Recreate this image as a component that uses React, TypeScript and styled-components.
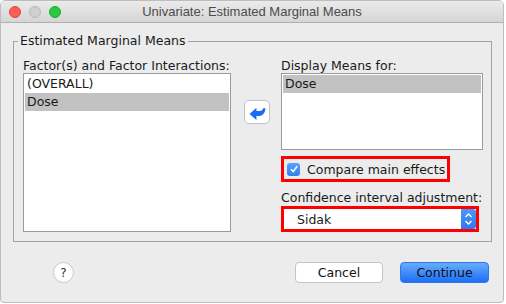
import React from "react";
import styled, { createGlobalStyle } from "styled-components";

const Global = createGlobalStyle`
  html, body { margin: 0; padding: 0; background: #ffffff; }
  body { font-family: "DejaVu Sans", "Liberation Sans", sans-serif; font-size: 12.5px; color: #1a1a1a; }
`;

const Window = styled.div`
  width: 504px;
  height: 303px;
  box-sizing: border-box;
  border: 1px solid #bdbdbd;
  border-radius: 5px 5px 4px 4px;
  background: #ececec;
  display: flex;
  flex-direction: column;
  overflow: hidden;
`;

const TitleBar = styled.div`
  height: 21px;
  flex: none;
  display: flex;
  align-items: center;
  position: relative;
  background: linear-gradient(#ebebeb, #d5d5d5);
  border-bottom: 1px solid #b1b1b1;
`;

const Lights = styled.div`
  display: flex;
  gap: 8px;
  padding-left: 8px;
`;

const Light = styled.span<{ $c: string; $b: string }>`
  width: 12px;
  height: 12px;
  border-radius: 50%;
  background: ${(p) => p.$c};
  box-sizing: border-box;
  border: 0.5px solid ${(p) => p.$b};
`;

const Title = styled.div`
  position: absolute;
  left: 0;
  right: 0;
  text-align: center;
  font-family: "Liberation Sans", sans-serif;
  font-size: 13px;
  color: #4c4c4c;
`;

const Group = styled.fieldset`
  margin: 10px 11px 0 12px;
  padding: 0 8px 9px 9px;
  border: 1px solid #a3a3a3;
  display: grid;
  grid-template-columns: 208px 26px 202px;
  column-gap: 12px;
  align-items: start;
`;

const Legend = styled.legend`
  margin-left: -5px;
  padding: 0 2px;
  font-size: 12.5px;
  line-height: 16px;
  color: #1a1a1a;
`;

const Column = styled.div`
  display: flex;
  flex-direction: column;
  padding-top: 9px;
`;

const Label = styled.div<{ $mt?: number }>`
  height: 15px;
  line-height: 15px;
  margin-top: ${(p) => p.$mt ?? 0}px;
  white-space: nowrap;
`;

const List = styled.div<{ $h: number }>`
  height: ${(p) => p.$h}px;
  box-sizing: border-box;
  background: #ffffff;
  border: 1px solid #9b9b9b;
  padding: 1px;
`;

const Item = styled.div<{ $sel?: boolean }>`
  height: 18px;
  line-height: 18px;
  padding-left: 2px;
  background: ${(p) => (p.$sel ? "#c2c2c2" : "transparent")};
`;

const ArrowButton = styled.button`
  margin-top: 42px;
  margin-left: 1px;
  width: 26px;
  height: 24px;
  padding: 0;
  border: 1px solid #c2c2c2;
  border-radius: 5px;
  background: #ffffff;
  display: flex;
  align-items: center;
  justify-content: center;
`;

const RedBox = styled.div<{ $mt: number }>`
  margin-top: ${(p) => p.$mt}px;
  height: 26px;
  box-sizing: border-box;
  border: 3px solid #ff0000;
  display: flex;
  align-items: center;
`;

const CheckRow = styled(RedBox)`
  width: 169px;
  padding-left: 3px;
  gap: 7px;
`;

const CheckBox = styled.span`
  width: 13px;
  height: 13px;
  border-radius: 3px;
  background: linear-gradient(#5aa2ff, #2f7ff2);
  display: flex;
  align-items: center;
  justify-content: center;
`;

const SelectBox = styled(RedBox)`
  width: 198px;
  padding: 0;
`;

const SelectInner = styled.div`
  flex: 1;
  height: 20px;
  display: flex;
  align-items: center;
  background: #ffffff;
`;

const SelectText = styled.span`
  flex: 1;
  padding-left: 13px;
`;

const Stepper = styled.span`
  width: 15px;
  height: 20px;
  background: linear-gradient(#4e97fb, #2d79ef);
  border-radius: 0 3px 3px 0;
  display: flex;
  align-items: center;
  justify-content: center;
`;

const Footer = styled.div`
  flex: 1;
  display: flex;
  align-items: center;
  padding: 0 14px 0 52px;
`;

const Help = styled.button`
  width: 21px;
  height: 21px;
  border-radius: 50%;
  border: 1px solid #c8c8c8;
  background: #ffffff;
  padding: 0;
  font-family: "DejaVu Sans", sans-serif;
  font-size: 12px;
  color: #333;
  display: flex;
  align-items: center;
  justify-content: center;
  margin-top: 1px;
`;

const Spacer = styled.div`
  flex: 1;
`;

const Button = styled.button<{ $primary?: boolean }>`
  width: ${(p) => (p.$primary ? 89 : 88)}px;
  height: 21px;
  margin-left: ${(p) => (p.$primary ? 17 : 0)}px;
  margin-top: 1px;
  box-sizing: border-box;
  border-radius: 4px;
  padding: 0;
  font-family: "DejaVu Sans", sans-serif;
  font-size: 12.5px;
  color: #111;
  border: 1px solid ${(p) => (p.$primary ? "#2a78ee" : "#c4c4c4")};
  background: ${(p) => (p.$primary ? "linear-gradient(#69acfd, #1c6ef7)" : "#ffffff")};
`;

export default function App() {
  return (
    <>
      <Global />
      <Window>
        <TitleBar>
          <Lights>
            <Light $c="#fd5f57" $b="#e0443e" />
            <Light $c="#cfcfcf" $b="#b9b9b9" />
            <Light $c="#29c941" $b="#1aab29" />
          </Lights>
          <Title>Univariate: Estimated Marginal Means</Title>
        </TitleBar>
        <Group>
          <Legend>Estimated Marginal Means</Legend>
          <Column>
            <Label>Factor(s) and Factor Interactions:</Label>
            <List $h={159}>
              <Item>(OVERALL)</Item>
              <Item $sel>Dose</Item>
            </List>
          </Column>
          <Column>
            <ArrowButton aria-label="move">
              <svg width="17" height="15" viewBox="0 0 16 14">
                <path
                  d="M0.5 8.5 L7 2.5 L7 5.5 L10 5.5 C12 5.5 13 4.5 13.3 3 L15.5 3 C15.3 7.5 12.8 10.2 9.5 10.2 L7 10.2 L7 14 Z"
                  fill="#1a6cf5"
                />
              </svg>
            </ArrowButton>
          </Column>
          <Column>
            <Label>Display Means for:</Label>
            <List $h={77}>
              <Item $sel>Dose</Item>
            </List>
            <CheckRow $mt={6}>
              <CheckBox>
                <svg width="10" height="10" viewBox="0 0 10 10">
                  <path d="M2 5.3 L4.2 7.6 L8.2 2.2" stroke="#fff" strokeWidth="1.6" fill="none" />
                </svg>
              </CheckBox>
              Compare main effects
            </CheckRow>
            <Label $mt={8}>Confidence interval adjustment:</Label>
            <SelectBox $mt={1}>
              <SelectInner>
                <SelectText>Sidak</SelectText>
                <Stepper>
                  <svg width="9" height="14" viewBox="0 0 9 14">
                    <path d="M1.5 5 L4.5 2 L7.5 5 M1.5 9 L4.5 12 L7.5 9" stroke="#fff" strokeWidth="1.4" fill="none" />
                  </svg>
                </Stepper>
              </SelectInner>
            </SelectBox>
          </Column>
        </Group>
        <Footer>
          <Help>?</Help>
          <Spacer />
          <Button>Cancel</Button>
          <Button $primary>Continue</Button>
        </Footer>
      </Window>
    </>
  );
}
